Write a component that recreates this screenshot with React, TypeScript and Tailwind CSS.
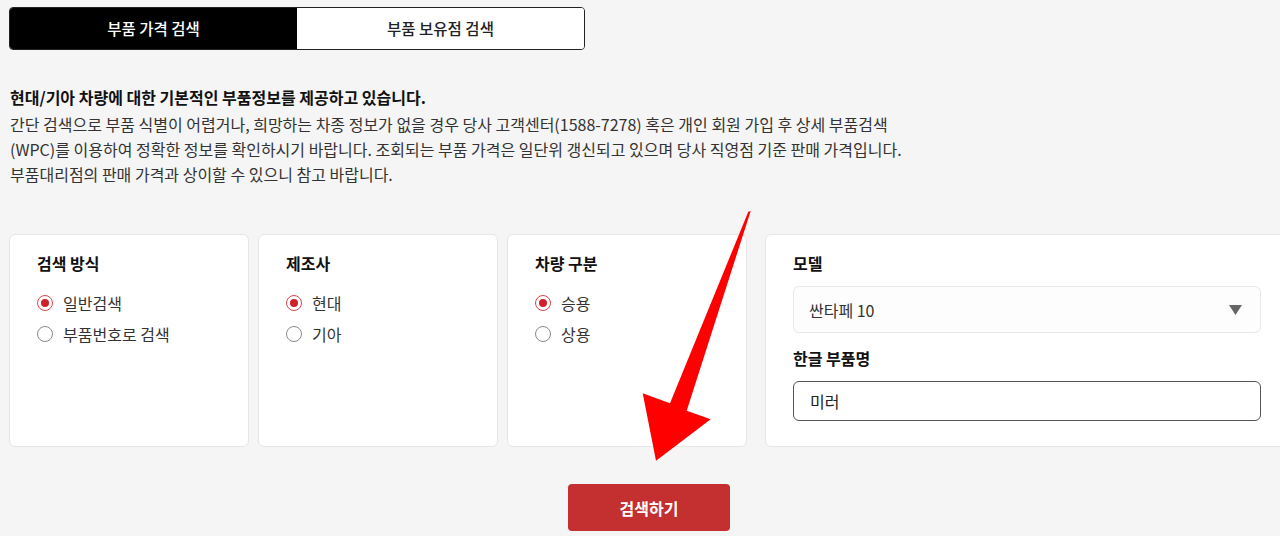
import React, { useState } from 'react';

const font = { fontFamily: '"Noto Sans CJK KR", "Noto Sans", sans-serif' };

interface RadioGroupProps {
  title: string;
  options: string[];
  checked: number;
}

const Radio: React.FC<{ on: boolean; label: string }> = ({ on, label }) => (
  <label className="flex items-center gap-[10px] h-[31px] text-[16px] text-[#333]">
    <span
      className={`w-[16px] h-[16px] rounded-full border flex items-center justify-center bg-white ${
        on ? 'border-[#d8474b]' : 'border-[#8a8a8a]'
      }`}
    >
      {on && <span className="w-[8px] h-[8px] rounded-full bg-[#d0202a]" />}
    </span>
    {label}
  </label>
);

const RadioCard: React.FC<RadioGroupProps> = ({ title, options, checked }) => (
  <div className="w-[240px] h-[213px] shrink-0 bg-white border border-[#e6e6e6] rounded-[6px] pl-[27px] pt-[16px]">
    <h3 className="text-[16px] font-bold text-[#111] leading-[24px]">{title}</h3>
    <div className="mt-[12px] flex flex-col">
      {options.map((o, i) => (
        <Radio key={o} on={i === checked} label={o} />
      ))}
    </div>
  </div>
);

export default function App() {
  const [tab, setTab] = useState(0);

  return (
    <div className="relative w-[1280px] h-[536px] overflow-hidden bg-[#f5f5f5] text-[#333]" style={font}>
      <div className="pl-[9px] pt-[7px]">
        {/* tabs */}
        <div className="flex w-[576px] h-[43px] rounded-[4px] border border-[#222] overflow-hidden text-[15.5px]">
          {['부품 가격 검색', '부품 보유점 검색'].map((t, i) => (
            <button
              key={t}
              onClick={() => setTab(i)}
              className={`flex-1 flex items-center justify-center font-medium ${
                tab === i ? 'bg-black text-white' : 'bg-white text-[#222]'
              }`}
            >
              {t}
            </button>
          ))}
        </div>

        {/* info */}
        <div className="mt-[35px] pl-px text-[16px] leading-[25px]">
          <p className="font-bold text-[#111]">현대/기아 차량에 대한 기본적인 부품정보를 제공하고 있습니다.</p>
          <p className="text-[#333] mt-[2px]">
            간단 검색으로 부품 식별이 어렵거나, 희망하는 차종 정보가 없을 경우 당사 고객센터(1588-7278) 혹은 개인 회원 가입 후 상세 부품검색
            <br />
            (WPC)를 이용하여 정확한 정보를 확인하시기 바랍니다. 조회되는 부품 가격은 일단위 갱신되고 있으며 당사 직영점 기준 판매 가격입니다.
            <br />
            부품대리점의 판매 가격과 상이할 수 있으니 참고 바랍니다.
          </p>
        </div>

        {/* search cards */}
        <div className="mt-[47px] flex">
          <RadioCard title="검색 방식" options={['일반검색', '부품번호로 검색']} checked={0} />
          <div className="ml-[9px]">
            <RadioCard title="제조사" options={['현대', '기아']} checked={0} />
          </div>
          <div className="ml-[9px]">
            <RadioCard title="차량 구분" options={['승용', '상용']} checked={0} />
          </div>
          <div className="ml-[18px] w-[540px] h-[213px] shrink-0 bg-white border border-[#e6e6e6] rounded-[6px] pl-[27px] pt-[16px]">
            <h3 className="text-[16px] font-bold text-[#111] leading-[24px]">모델</h3>
            <div className="mt-[11px] w-[468px] h-[47px] rounded-[6px] border border-[#e8e8e8] bg-[#fdfdfd] flex items-center justify-between pl-[15px] pr-[18px] text-[16px] text-[#333]">
              <span>싼타페 10</span>
              <svg width="13" height="10" viewBox="0 0 13 10">
                <path d="M0 0 H13 L6.5 10 Z" fill="#666" />
              </svg>
            </div>
            <h3 className="mt-[13px] text-[16px] font-bold text-[#111] leading-[24px]">한글 부품명</h3>
            <div className="mt-[11px] w-[468px] h-[40px] rounded-[6px] border border-[#555] bg-white flex items-center pl-[16px] text-[16px] text-[#222]">
              미러
            </div>
          </div>
        </div>

        {/* submit */}
        <div className="mt-[37px] pl-[559px]">
          <button className="w-[162px] h-[47px] rounded-[4px] bg-[#c3302f] text-white text-[16px] font-bold">
            검색하기
          </button>
        </div>
      </div>

      {/* annotation arrow */}
      <svg className="absolute left-0 top-0 pointer-events-none" width="1280" height="536">
        <polygon
          points="750.7,211 686.7,410.7 710.7,419.3 656,460.7 642.7,393.3 670,403.3 748.3,211.7"
          fill="#ff0000"
        />
      </svg>
    </div>
  );
}
